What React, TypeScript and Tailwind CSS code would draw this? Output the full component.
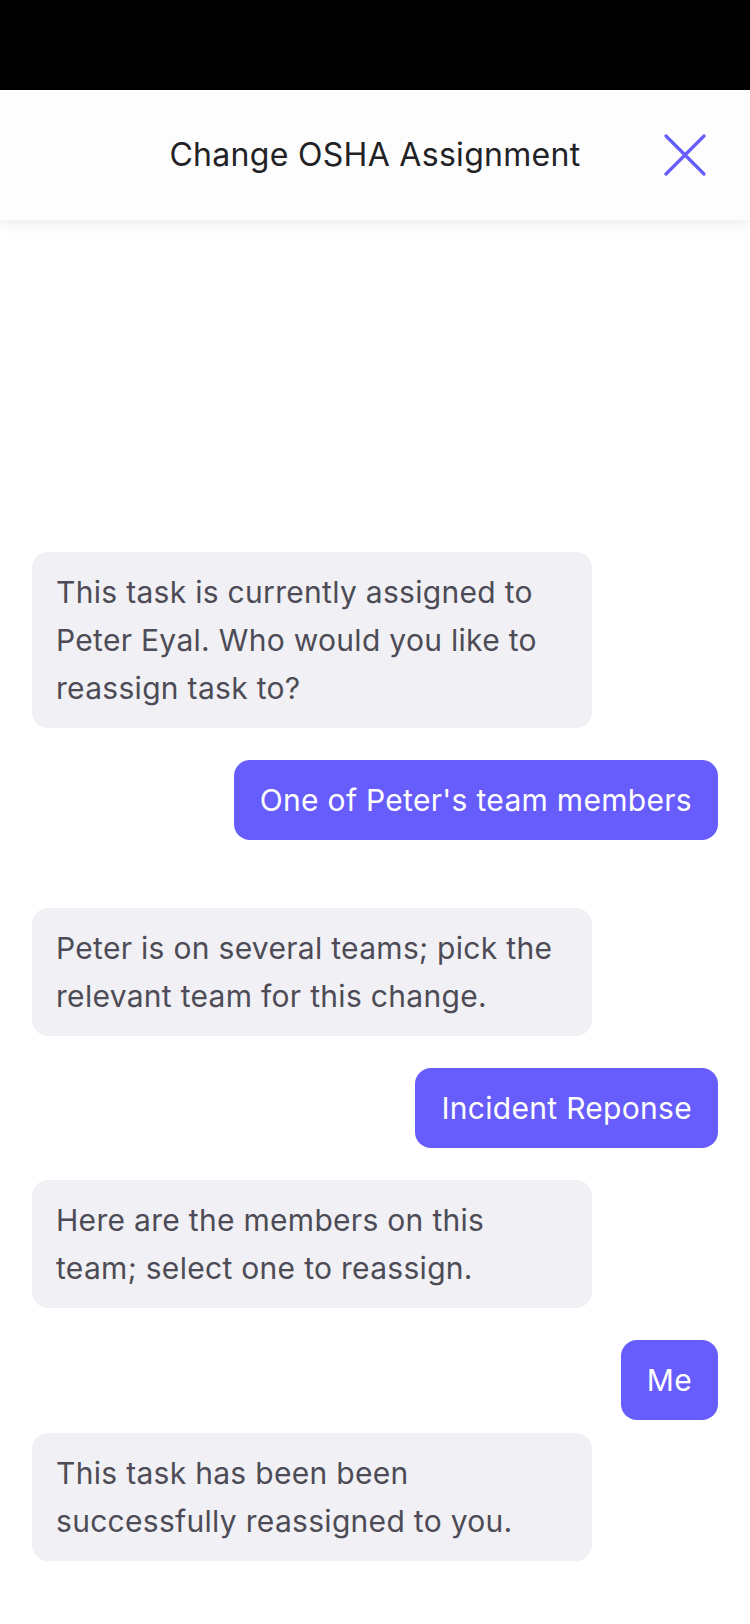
import React from 'react';

type Msg = { from: 'bot' | 'me'; text: string; mt: string };

const messages: Msg[] = [
  { from: 'bot', text: 'This task is currently assigned to Peter Eyal. Who would you like to reassign task to?', mt: 'mt-0' },
  { from: 'me', text: "One of Peter's team members", mt: 'mt-[32px]' },
  { from: 'bot', text: 'Peter is on several teams; pick the relevant team for this change.', mt: 'mt-[68px]' },
  { from: 'me', text: 'Incident Reponse', mt: 'mt-[32px]' },
  { from: 'bot', text: 'Here are the members on this team; select one to reassign.', mt: 'mt-[32px]' },
  { from: 'me', text: 'Me', mt: 'mt-[32px]' },
  { from: 'bot', text: 'This task has been been successfully reassigned to you.', mt: 'mt-[13px]' },
];

function CloseIcon() {
  return (
    <svg width="42" height="42" viewBox="0 0 42 42" fill="none">
      <path d="M2 2L40 40M40 2L2 40" stroke="#675cfc" strokeWidth="3.2" strokeLinecap="round" />
    </svg>
  );
}

export default function App() {
  return (
    <div className="w-[750px] h-[1624px] bg-white overflow-hidden" style={{ fontFamily: 'Inter, "Noto Sans", sans-serif' }}>
      <div className="h-[90px] bg-black" />

      <header className="relative h-[130px] bg-[#fdfdfd] flex items-center justify-center shadow-[0_4px_14px_rgba(0,0,0,0.08)]">
        <h1 className="text-[32px] text-[#222226] tracking-[0.3px]">Change OSHA Assignment</h1>
        <button className="absolute right-[44px] top-[44px]">
          <CloseIcon />
        </button>
      </header>

      <main className="flex flex-col px-[32px] pt-[332px]">
        {messages.map((m, i) =>
          m.from === 'bot' ? (
            <div
              key={i}
              className={`${m.mt} w-[560px] self-start rounded-[16px] bg-[#f1f0f5] px-[24px] py-[16px] text-[30px] leading-[48px] tracking-[0.3px] text-[#4d4c56]`}
            >
              {m.text}
            </div>
          ) : (
            <div
              key={i}
              className={`${m.mt} self-end rounded-[16px] bg-[#675cfc] px-[26px] py-[16px] text-[30px] leading-[48px] tracking-[0.3px] text-white`}
            >
              {m.text}
            </div>
          )
        )}
      </main>
    </div>
  );
}
